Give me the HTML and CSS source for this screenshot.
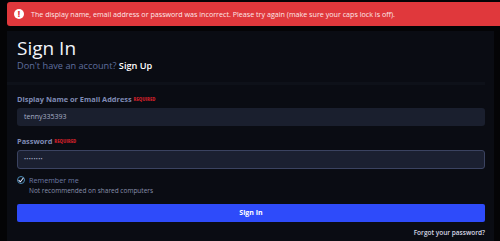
FILE: index.html
```html
<!DOCTYPE html>
<html>
<head>
<meta charset="utf-8">
<link rel="stylesheet" href="styles.css">
</head>
<body>
<div class="alert">
  <span class="alert-icon">!</span>
  <span class="alert-text">The display name, email address or password was incorrect. Please try again (make sure your caps lock is off).</span>
</div>
<div class="card">
  <div class="card-head">
    <h1 class="title">Sign In</h1>
    <p class="subtitle">Don't have an account? <a class="signup">Sign Up</a></p>
  </div>
  <form class="form">
    <label class="label">Display Name or Email Address <span class="req">REQUIRED</span></label>
    <div class="input">tenny335393</div>
    <label class="label label-pw">Password <span class="req">REQUIRED</span></label>
    <div class="input input-focus">••••••••</div>
    <div class="remember">
      <span class="check"><svg viewBox="0 0 10 10" width="6" height="6"><path d="M1.5 5.5 L4 8 L8.5 2" fill="none" stroke="#dfe6ff" stroke-width="1.8" stroke-linecap="round" stroke-linejoin="round"/></svg></span>
      <div class="remember-text">
        <div class="remember-label">Remember me</div>
        <div class="remember-note">Not recommended on shared computers</div>
      </div>
    </div>
    <div class="button">Sign In</div>
    <div class="forgot"><a>Forgot your password?</a></div>
  </form>
</div>
</body>
</html>
```
FILE: styles.css
```css
html, body {
  margin: 0;
  padding: 0;
  background: #040406;
  font-family: "Open Sans", "Liberation Sans", sans-serif;
  overflow: hidden;
  height: 241px;
}
.alert {
  margin: 2px 0 0 7px;
  height: 24px;
  background: #e0383c;
  border-radius: 3px 0 0 3px;
  display: flex;
  align-items: center;
  padding-left: 7px;
  color: #fde9e9;
}
.alert-icon {
  width: 10px;
  height: 10px;
  border-radius: 50%;
  background: #fff;
  color: #e0383c;
  font-size: 8px;
  font-weight: 800;
  line-height: 10px;
  text-align: center;
  margin-right: 7px;
}
.alert-text {
  font-size: 7.15px;
  white-space: nowrap;
}
.card {
  margin: 5px 6px 0 7px;
  background: #0a0c13;
  height: 220px;
}
.card-head {
  padding: 7px 10px 10px;
  margin-right: 9px;
  border-bottom: 3px solid #0e1119;
}
.title {
  margin: 0;
  font-size: 19px;
  font-weight: 400;
  line-height: 20px;
  color: #f2f4fa;
}
.subtitle {
  margin: 1px 0 0;
  font-size: 9.2px;
  line-height: 13px;
  color: #5f6e9e;
}
.signup {
  color: #ffffff;
  font-weight: 600;
}
.form {
  padding: 9px 9px 0 10px;
  display: flex;
  flex-direction: column;
}
.label {
  font-size: 7.4px;
  font-weight: 700;
  color: #7f8bb5;
  line-height: 11px;
}
.req {
  font-size: 4.3px;
  color: #c11f28;
  font-weight: 800;
  vertical-align: 1px;
}
.input {
  margin-top: 3px;
  height: 18px;
  background: #1a1f2e;
  border-radius: 3px;
  font-size: 7px;
  line-height: 18px;
  color: #a7aec6;
  padding-left: 7px;
  box-sizing: border-box;
}
.label-pw {
  margin-top: 10px;
}
.input-focus {
  height: 19px;
  border: 1px solid #3b4361;
  background: #1b2031;
  line-height: 17px;
  padding-left: 6px;
  letter-spacing: 0.3px;
  font-size: 5.5px;
}
.remember {
  margin-top: 6px;
  display: flex;
  align-items: flex-start;
}
.check {
  width: 6px;
  height: 6px;
  border: 1px solid #4a89b5;
  border-radius: 50%;
  display: flex;
  align-items: center;
  justify-content: center;
  margin: 1px 4px 0 0;
}
.remember-label {
  font-size: 7.2px;
  line-height: 10px;
  color: #6d7aa4;
}
.remember-note {
  font-size: 6.5px;
  line-height: 12px;
  color: #8890ac;
}
.button {
  margin-top: 7px;
  height: 18px;
  background: #2e4bfa;
  border-radius: 2px;
  color: #fff;
  font-size: 7px;
  font-weight: 700;
  text-align: center;
  line-height: 18px;
}
.forgot {
  margin-top: 6px;
  text-align: right;
  font-size: 6.5px;
  font-weight: 600;
  color: #d6d9e6;
}
```
